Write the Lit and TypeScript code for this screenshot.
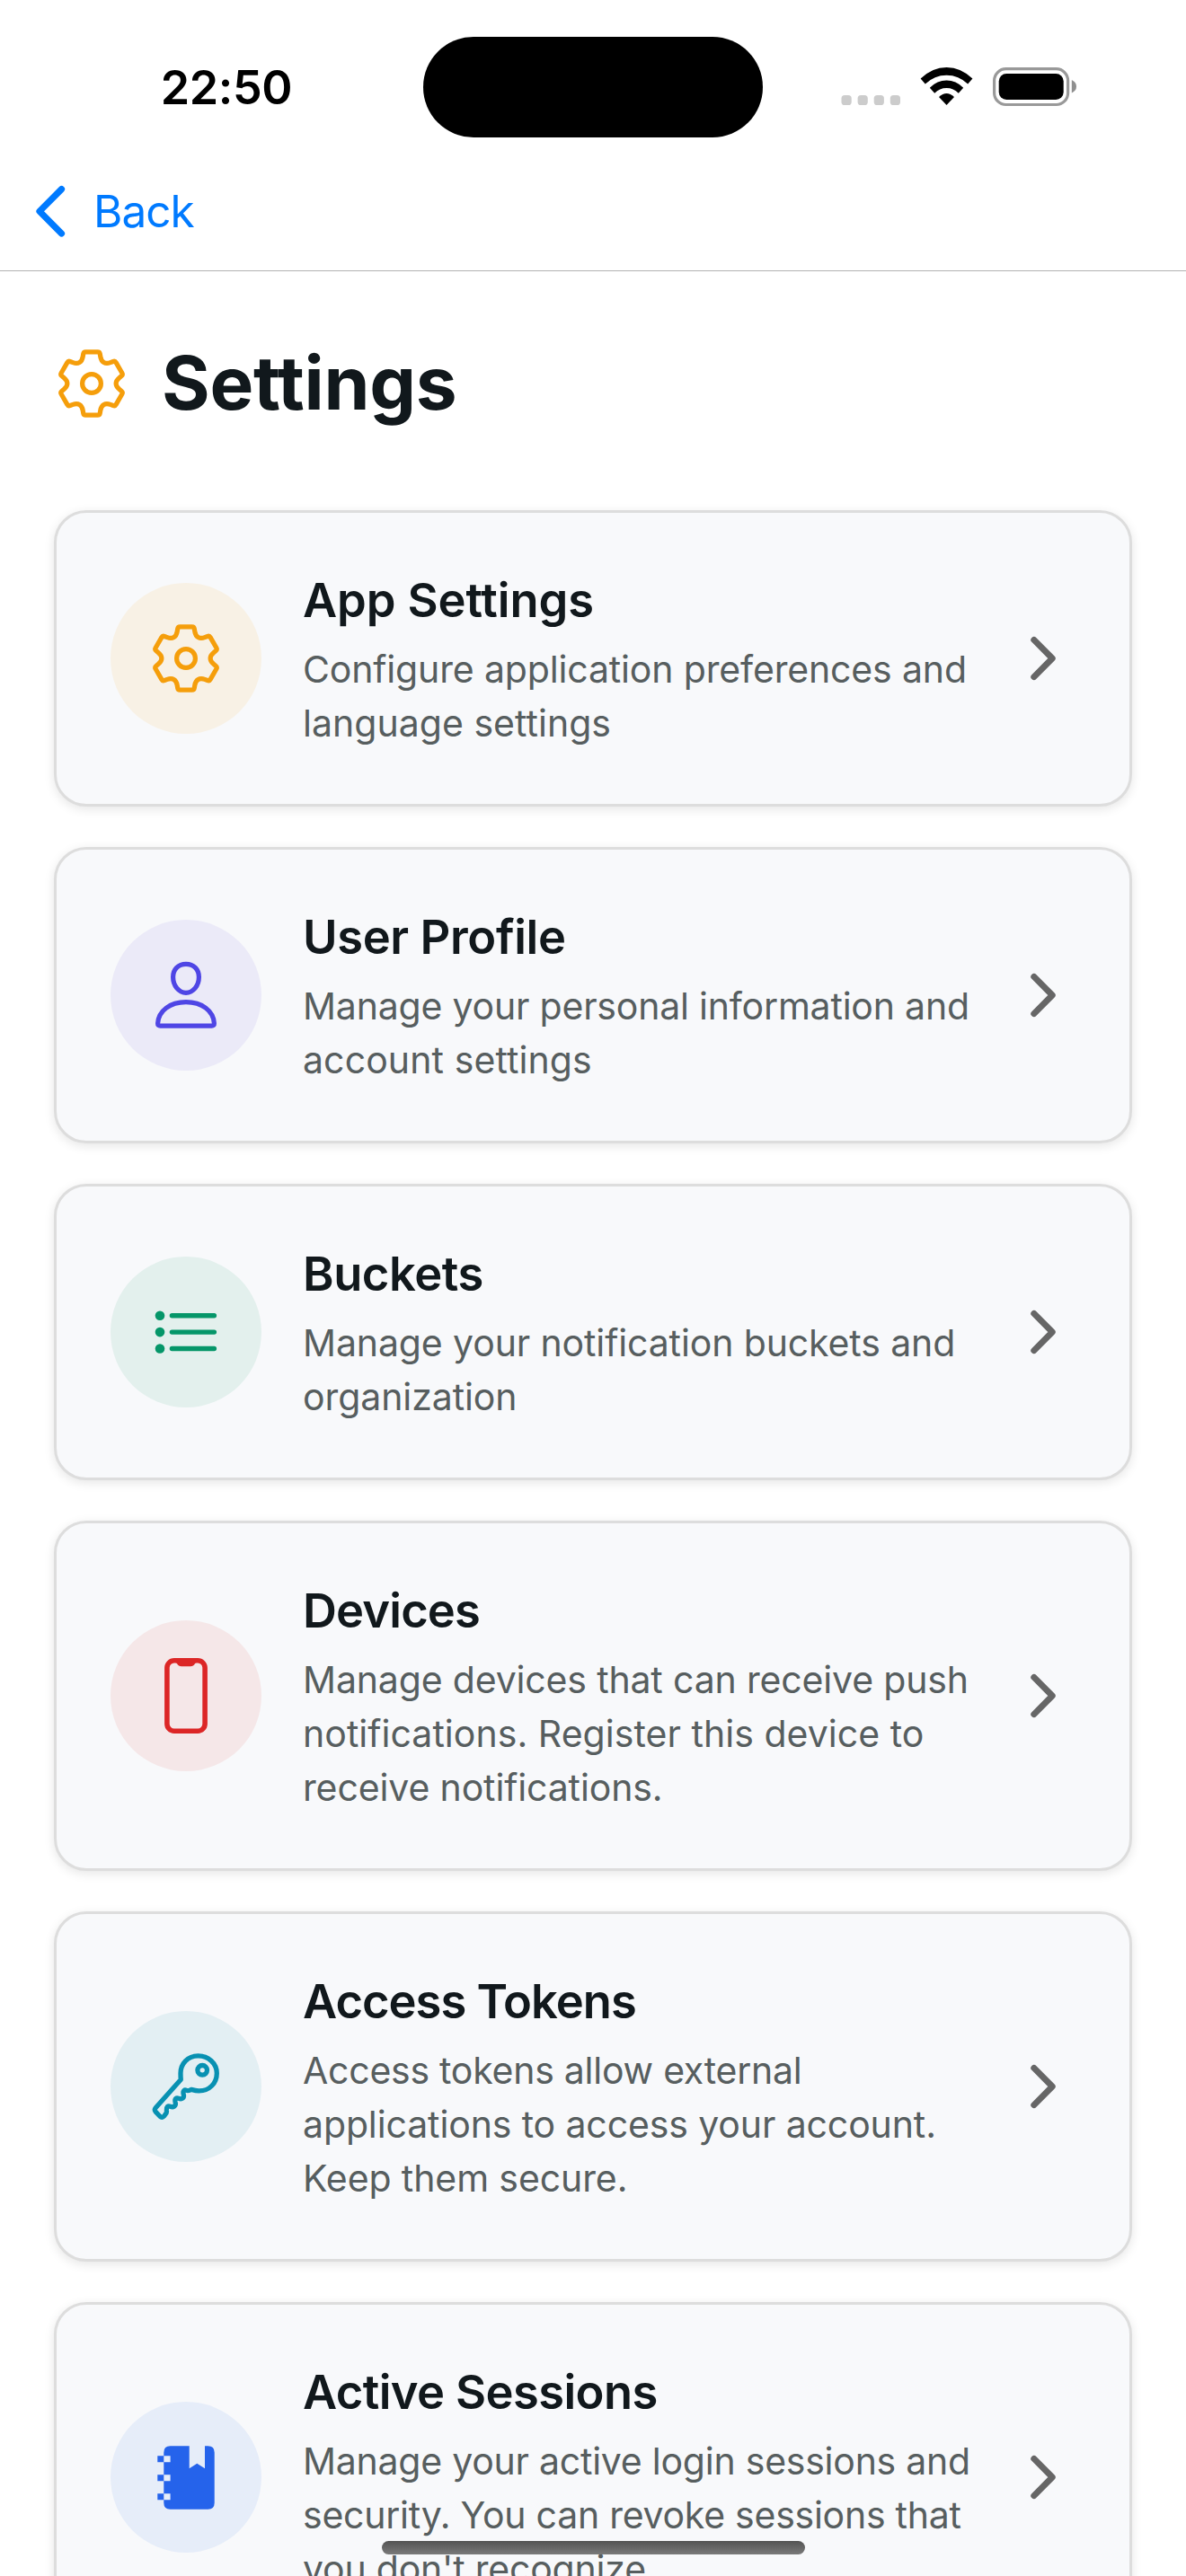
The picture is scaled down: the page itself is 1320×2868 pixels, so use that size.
import { LitElement, html, svg, css, type SVGTemplateResult } from "lit";
import { customElement, property } from "lit/decorators.js";

type Pt = [number, number];

/** Builds a closed outline through the points, rounding each corner by its radius. */
function roundedOutline(points: Pt[], radii: number[]): string {
  const n = points.length;
  const toward = (a: Pt, b: Pt, r: number): Pt => {
    const d = Math.hypot(b[0] - a[0], b[1] - a[1]);
    const t = Math.min(r / d, 0.5);
    return [a[0] + (b[0] - a[0]) * t, a[1] + (b[1] - a[1]) * t];
  };
  const f = (p: Pt) => `${p[0].toFixed(2)} ${p[1].toFixed(2)}`;
  let d = "";
  for (let i = 0; i < n; i++) {
    const p = points[i];
    const a = toward(p, points[(i + n - 1) % n], radii[i]);
    const b = toward(p, points[(i + 1) % n], radii[i]);
    d += `${i ? "L" : "M"}${f(a)}Q${f(p)} ${f(b)}`;
  }
  return d + "Z";
}

function gearOutline(): string {
  const tooth: Pt[] = [[-10.6, -25.2], [-8.9, -35.2], [8.9, -35.2], [10.6, -25.2]];
  const radii = [4.6, 2.2, 2.2, 4.6];
  const pts: Pt[] = [];
  const rs: number[] = [];
  for (let k = 0; k < 6; k++) {
    const c = Math.cos((k * Math.PI) / 3);
    const s = Math.sin((k * Math.PI) / 3);
    tooth.forEach(([x, y], i) => {
      pts.push([x * c - y * s, x * s + y * c]);
      rs.push(radii[i]);
    });
  }
  return roundedOutline(pts, rs);
}

const glyphs: Record<string, SVGTemplateResult> = {
  gear: svg`<g fill="none" stroke="currentColor" stroke-width="5.2" stroke-linejoin="round">
    <path d=${gearOutline()}/><circle r="10.4"/></g>`,
  person: svg`<g fill="none" stroke="currentColor" stroke-width="5.2" stroke-linejoin="round">
    <path d="M0 -34.6C8.6 -34.6 14.4 -28.6 14.4 -20.2C14.4 -10.6 8 -2.7 0 -2.7S-14.4 -10.6 -14.4 -20.2C-14.4 -28.6 -8.6 -34.6 0 -34.6Z"/>
    <path d="M-31.4 31.4C-30.6 17.2 -17.6 7.7 0 7.7S30.6 17.2 31.4 31.4Q31.5 34.2 28.6 34.2H-28.6Q-31.5 34.2 -31.4 31.4Z"/></g>`,
  list: svg`<g fill="currentColor" stroke="currentColor" stroke-width="5.4" stroke-linecap="round">
    <g stroke="none"><circle cx="-29" cy="-18.2" r="5.3"/><circle cx="-29" cy="0.1" r="5.3"/><circle cx="-29" cy="18.5" r="5.3"/></g>
    <path d="M-15.6 -18.2H31.4M-15.6 0.1H31.4M-15.6 18.5H31.4"/></g>`,
  phone: svg`<rect x="-21.1" y="-39.2" width="42.2" height="78.4" rx="8" fill="none" stroke="currentColor" stroke-width="5.6"/>
    <path fill="currentColor" d="M-13 -40H13V-37H12.4Q10.6 -37 10 -35.8Q8.4 -32.8 5 -32.8H-5Q-8.4 -32.8 -10 -35.8Q-10.6 -37 -12.4 -37H-13Z"/>`,
  key: svg`<g fill="none" stroke="currentColor" stroke-width="5.3" stroke-linejoin="round">
    <path d="M-5.7 -7.8L-33.8 23.8Q-35.6 25.9 -33.8 28.1L-29 33.2Q-26.6 35.4 -24.4 33L-21.8 29.4Q-21.3 28.3 -21.6 26.4C-22 22.6 -20 21.2 -17.6 22.2C-14.2 23.7 -10.6 21.8 -11.9 17.4C-12.9 13.4 -10.6 12.4 -8.4 13.2C-4.4 15 -1.6 12.6 -2.8 8.4C-3.8 4.6 -1.6 3.4 0.6 4.4C2.6 5.2 4 4.2 5.8 3.4C9.4 4.4 11.6 5 14.6 4.9C26 4.9 34.3 -3.6 34.3 -14.8C34.3 -25.6 25 -34.2 13.5 -34.2C2 -34.2 -6 -25.4 -6 -14.8C-6 -12 -6 -10 -5.7 -7.8Z"/>
    <circle cx="18.2" cy="-18.2" r="5.3"/></g>`,
  notebook: svg`<path fill="currentColor" fill-rule="evenodd" d="M-17.4 -34.8H3.7V-9.8L12.3 -15.2L21 -9.8V-34.8H24.4Q31.7 -34.8 31.7 -27.5V28.5Q31.7 35.8 24.4 35.8H-17.4Q-24.7 35.8 -24.7 28.5V25.2H-31.7V18.2H-24.7V4.2H-31.7V-2.8H-24.7V-16.8H-31.7V-23.8H-24.7V-27.5Q-24.7 -34.8 -17.4 -34.8ZM-24.7 -23.8V-16.8H-17.4V-23.8ZM-24.7 -2.8V4.2H-17.4V-2.8ZM-24.7 18.2V25.2H-17.4V18.2Z"/>`,
};

@customElement("glyph-icon")
class GlyphIcon extends LitElement {
  @property() name = "gear";
  static styles = css`
    :host { display: block; width: 84px; height: 84px; }
    .glyph { display: block; width: 84px; height: 84px; }
  `;
  render() {
    return html`<svg class="glyph" viewBox="-42 -42 84 84">${glyphs[this.name]}</svg>`;
  }
}

/** A run of text with its letter spacing in pixels. */
type Run = [string, number];

interface Entry {
  icon: string;
  tone: string;
  title: Run;
  lines: Run[];
}

@customElement("settings-card")
class SettingsCard extends LitElement {
  @property({ attribute: false }) entry!: Entry;
  static styles = css`
    :host { display: block; }
    .card {
      box-sizing: border-box;
      display: flex;
      align-items: center;
      gap: 46px;
      padding: 60px;
      border: 3px solid #dddddd;
      border-radius: 36px;
      background: #f8f9fb;
      box-shadow: 0 3px 12px rgba(0, 0, 0, 0.1);
    }
    .badge {
      flex: none;
      display: grid;
      place-items: center;
      width: 168px;
      height: 168px;
      border-radius: 50%;
    }
    .gear { color: #f59e0b; background: #f8f1e5; }
    .indigo { color: #4f46e5; background: #ebeaf8; }
    .green { color: #059669; background: #e3f0ed; }
    .red { color: #dc2626; background: #f5e7e8; }
    .cyan { color: #0891b2; background: #e3eff3; }
    .blue { color: #2563eb; background: #e6edf9; }
    .copy { flex: 1; min-width: 0; padding-top: 4px; }
    .title {
      margin: 0 0 14px;
      font-size: 52.5px;
      line-height: 66px;
      font-weight: 600;
      color: #11181c;
      white-space: nowrap;
    }
    .text {
      display: block;
      font-size: 41px;
      line-height: 60px;
      color: #575e5f;
      white-space: nowrap;
    }
    .chevron { flex: none; display: block; width: 60px; height: 60px; margin-right: 6px; }
  `;
  render() {
    const { icon, tone, title, lines } = this.entry;
    return html`<div class="card">
      <div class="badge ${tone}"><glyph-icon name=${icon}></glyph-icon></div>
      <div class="copy">
        <h2 class="title" style="letter-spacing:${title[1]}px">${title[0]}</h2>
        ${lines.map(([t, s]) => html`<span class="text" style="letter-spacing:${s}px">${t}</span>`)}
      </div>
      <svg class="chevron" viewBox="-30 -30 60 60">
        <path d="M-10.2 -20.6L10.2 0L-10.2 20.6" fill="none" stroke="#666666" stroke-width="7" stroke-linecap="round" stroke-linejoin="round"/>
      </svg>
    </div>`;
  }
}

const entries: Entry[] = [
  { icon: "gear", tone: "gear", title: ["App Settings", -0.1], lines: [["Configure application preferences and", -0.15], ["language settings", 0.03]] },
  { icon: "person", tone: "indigo", title: ["User Profile", -0.4], lines: [["Manage your personal information and", -0.2], ["account settings", 0.1]] },
  { icon: "list", tone: "green", title: ["Buckets", -0.45], lines: [["Manage your notification buckets and", -0.12], ["organization", -0.08]] },
  { icon: "phone", tone: "red", title: ["Devices", -0.85], lines: [["Manage devices that can receive push", -0.16], ["notifications. Register this device to", 0.04], ["receive notifications.", -0.13]] },
  { icon: "key", tone: "cyan", title: ["Access Tokens", -1], lines: [["Access tokens allow external", -0.25], ["applications to access your account.", -0.12], ["Keep them secure.", -0.1]] },
  { icon: "notebook", tone: "blue", title: ["Active Sessions", -0.62], lines: [["Manage your active login sessions and", -0.24], ["security. You can revoke sessions that", -0.25], ["you don't recognize.", -0.2]] },
];

@customElement("app-root")
class AppRoot extends LitElement {
  static styles = css`
    :host {
      display: block;
      position: relative;
      width: 1320px;
      height: 2868px;
      overflow: hidden;
      background: #ffffff;
      font-family: Inter, "Liberation Sans", sans-serif;
    }
    .status {
      box-sizing: border-box;
      display: grid;
      grid-template-columns: 471px 378px 1fr;
      height: 168px;
      padding-top: 41px;
    }
    .time {
      justify-self: center;
      padding-left: 33px;
      line-height: 114px;
      font-size: 52px;
      font-weight: 600;
      letter-spacing: -0.4px;
      color: #000;
    }
    .island { height: 112px; border-radius: 56px; background: #000; }
    .signals { display: block; width: 270px; height: 60px; margin: 27px 0 0 81px; }
    .nav {
      box-sizing: border-box;
      display: flex;
      align-items: center;
      height: 134px;
      padding: 0 0 0 36px;
      gap: 26px;
      border-bottom: 1px solid #b2b2b2;
      color: #007aff;
      font-size: 49.5px;
    }
    .back { display: block; width: 42px; height: 66px; }
    .label { letter-spacing: -1px; }
    .heading { display: flex; align-items: center; gap: 36px; height: 120px; padding: 65px 0 0 60px; }
    .pagetitle {
      margin: 0;
      font-size: 82px;
      line-height: 100px;
      font-weight: 700;
      letter-spacing: -0.3px;
      color: #11181c;
    }
    .mark { color: #f59e0b; }
    .list { display: flex; flex-direction: column; gap: 45px; padding: 81px 60px 0; }
    .home {
      position: absolute;
      left: 425px;
      top: 2829px;
      width: 471px;
      height: 15px;
      border-radius: 7.5px;
      background: linear-gradient(#535353, #7a7a7a);
    }
  `;
  render() {
    return html`
      <header class="status">
        <div class="time">22:50</div>
        <div class="island"></div>
        <svg class="signals" viewBox="930 68 270 60">
          <g fill="#cccccc">
            ${[936.5, 954.6, 972.7, 990.8].map((x) => svg`<rect x=${x} y="106" width="11.2" height="11" rx="3.6"/>`)}
          </g>
          <g fill="#000">
            <path d="M1024.6 87.6Q1037.5 75 1053.5 75T1082.4 87.6L1077.2 93.6Q1067 83.8 1053.5 83.8T1029.8 93.6Z"/>
            <path d="M1034.8 97.8Q1043 89.6 1053.5 89.6T1072.2 97.8L1066.8 103.8Q1061.3 98 1053.5 98T1040.2 103.8Z"/>
            <path d="M1045 108Q1053.5 100 1062 108L1053.5 117Z"/>
            <rect x="1111.7" y="82" width="72" height="29" rx="8.5"/>
          </g>
          <rect x="1106.6" y="76.7" width="82" height="39.8" rx="13" fill="none" stroke="#999999" stroke-width="3.2"/>
          <path d="M1192.8 89Q1198 91.5 1198 96.3T1192.8 103.5Z" fill="#8f8f8f"/>
        </svg>
      </header>
      <nav class="nav">
        <svg class="back" viewBox="0 0 42 66">
          <path d="M32.5 8.6L8 33.3L32.5 58" fill="none" stroke="currentColor" stroke-width="7.2" stroke-linecap="round" stroke-linejoin="round"/>
        </svg>
        <span class="label">Back</span>
      </nav>
      <main>
        <div class="heading">
          <glyph-icon class="mark" name="gear"></glyph-icon>
          <h1 class="pagetitle">Settings</h1>
        </div>
        <div class="list">
          ${entries.map((e) => html`<settings-card .entry=${e}></settings-card>`)}
        </div>
      </main>
      <div class="home"></div>
    `;
  }
}
